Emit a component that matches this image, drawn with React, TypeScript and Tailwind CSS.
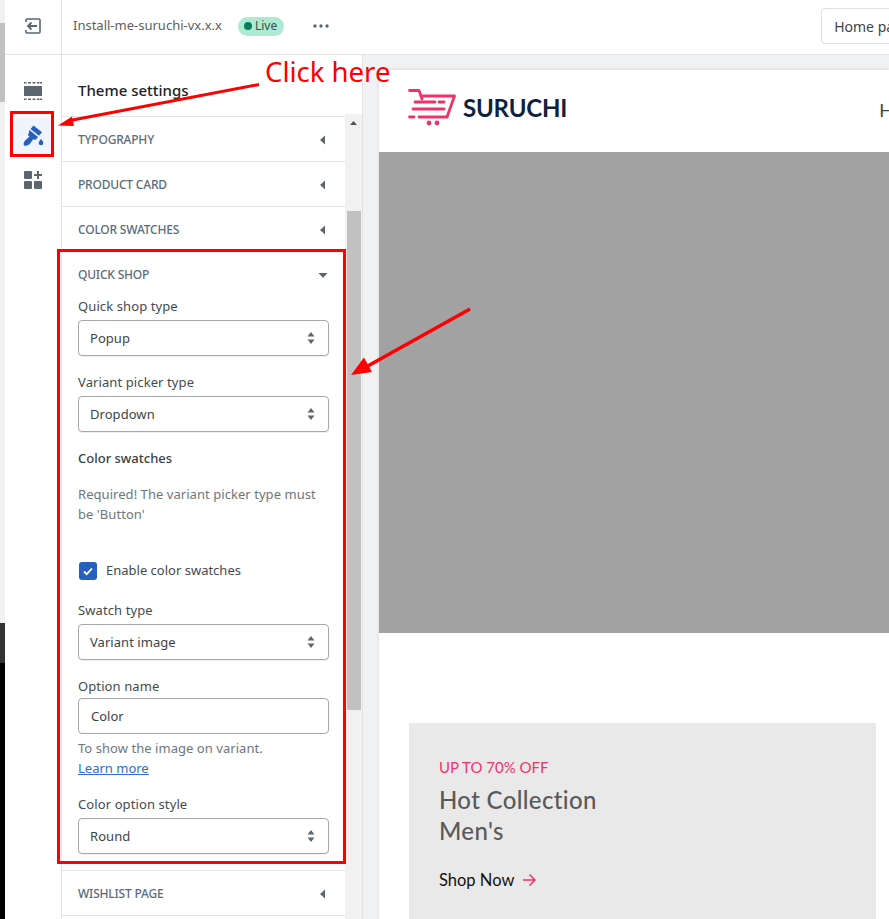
const uiFont = { fontFamily: '"Noto Sans", sans-serif' }

function Caret({ open }: { open?: boolean }) {
  return (
    <svg width="10" height="10" viewBox="0 0 10 10" className="shrink-0">
      {open ? <path d="M.5 3h9L5 8z" fill="#5c6670" /> : <path d="M8 .5v9L3 5z" fill="#5c6670" />}
    </svg>
  )
}

function SectionRow({ title }: { title: string }) {
  return (
    <div className="flex h-[45px] items-center justify-between border-b border-[#e1e3e5] pl-4 pr-[18px] pt-[2px]">
      <span className="text-[12px] font-medium tracking-[-0.2px] text-[#5c6b7e]">{title}</span>
      <Caret />
    </div>
  )
}

function SelectBox({ value }: { value: string }) {
  return (
    <div className="flex h-9 w-[251px] items-center justify-between rounded-[4px] border border-[#a3a8b0] bg-white pl-[11px] pr-[13px] text-[13px] tracking-[0.05px] text-[#3f4349] shadow-[0_1px_0_rgba(0,0,0,0.06)]">
      <span className="pt-[1px]">{value}</span>
      <svg width="8" height="14" viewBox="0 0 8 14" className="shrink-0">
        <path d="M4 1l3.500 4.500h-7zM4 13L.5 8.500h7z" fill="#5c6670" />
      </svg>
    </div>
  )
}

function Label({ children }: { children: React.ReactNode }) {
  return <div className="text-[13px] leading-5 tracking-[0.1px] text-[#454a50]">{children}</div>
}

function Sidebar() {
  return (
    <aside className="flex h-full w-[57px] shrink-0 flex-col items-center border-r border-[#e1e3e5] bg-white">
      <div className="flex h-[55px] w-full items-center justify-center border-b border-[#e1e3e5] pb-[2px] pr-[1px]">
        <svg width="16" height="16" viewBox="0 0 16 16" fill="none" className="shrink-0">
          <path d="M1 4V2a1 1 0 0 1 1-1h12a1 1 0 0 1 1 1v12a1 1 0 0 1-1 1H2a1 1 0 0 1-1-1v-2" stroke="#5c6670" strokeWidth="1.600" />
          <path d="M12 8H3M6.500 4.500L3 8l3.500 3.500" stroke="#5c6670" strokeWidth="1.800" />
        </svg>
      </div>
      <div className="mt-[27px] flex h-[18px] items-center justify-center">
        <svg width="18" height="18" viewBox="0 0 18 18" fill="#5c6670" className="shrink-0">
          <rect x="0" y="4" width="18" height="10" />
          <path d="M0 0h2.500v1.500H0zM4 0h3v1.500H4zM8.500 0h3v1.500h-3zM13 0h2.500v1.500H13zM16 0h2v1.500h-2zM0 16.500h2.500V18H0zM4 16.500h3V18H4zM8.500 16.500h3V18h-3zM13 16.500h2.500V18H13zM16 16.500h2V18h-2z" />
        </svg>
      </div>
      <div className="mt-[18px] flex h-9 w-9 items-center justify-center rounded-[4px] bg-[#f0f4fc]">
        <svg width="22" height="22" viewBox="0 0 22 22" fill="#2560bd" className="shrink-0">
          <path d="M11.500 .5l8.500 6.800-3 3.500-8.500-6.900z" />
          <path d="M7.500 5l8.500 7-1.900 2.300c-.5.600-1.300.700-1.900.2l-.8-.6-3.100 4.300c-1.200 1.500-3.900 3.300-6 2.200-1.400-.8-.5-3.400.9-4.800l4.300-4-1-.9c-.5-.5-.5-1.200-.1-1.700z" />
          <path d="M19 14c1.100 1.600 2.300 2.700 2.300 4a2.300 2.300 0 0 1-4.600 0c0-1.300 1.200-2.400 2.300-4z" />
        </svg>
      </div>
      <div className="mt-[17px] flex h-[18px] items-center justify-center">
        <svg width="18" height="18" viewBox="0 0 18 18" fill="#5c6670" className="shrink-0">
          <rect x="0" y="0" width="8" height="8" rx="1" />
          <rect x="0" y="10" width="8" height="8" rx="1" />
          <rect x="10" y="10" width="8" height="8" rx="1" />
          <path d="M13 0h2v3h3v2h-3v3h-2V5h-3V3h3z" />
        </svg>
      </div>
    </aside>
  )
}

function SettingsPanel() {
  return (
    <section className="flex h-full w-[301px] shrink-0 flex-col overflow-hidden border-r border-[#e1e3e5] bg-white">
      <h2 className="flex h-[61px] shrink-0 items-end pb-[16px] pl-4 text-[15px] font-medium leading-5 text-[#202328]">Theme settings</h2>
      <div className="flex min-h-0 flex-1">
        <div className="w-[283px] shrink-0 border-t border-[#e1e3e5]">
          <SectionRow title="TYPOGRAPHY" />
          <SectionRow title="PRODUCT CARD" />
          <SectionRow title="COLOR SWATCHES" />
          <div className="border-b border-[#e1e3e5] pb-4 pl-4 pr-4">
            <div className="flex h-[44px] items-center justify-between pr-[1px] pt-[1px]">
              <span className="text-[12px] font-medium tracking-[-0.2px] text-[#5c6b7e]">QUICK SHOP</span>
              <Caret open />
            </div>
            <div className="flex flex-col">
              <Label>Quick shop type</Label>
              <div className="mt-1"><SelectBox value="Popup" /></div>
              <div className="mt-4"><Label>Variant picker type</Label></div>
              <div className="mt-1"><SelectBox value="Dropdown" /></div>
              <div className="mt-4 text-[13px] font-medium leading-5 text-[#3a3e44]">Color swatches</div>
              <p className="mt-4 w-[251px] text-[13px] leading-5 tracking-[0.05px] text-[#6d7680]">Required! The variant picker type must be 'Button'</p>
              <label className="mt-[37px] flex h-5 items-center gap-[9px] pl-[1px]">
                <span className="flex h-[18px] w-[18px] items-center justify-center rounded-[3px] bg-[#2560bd]">
                  <svg width="12" height="12" viewBox="0 0 12 12" fill="none" className="shrink-0">
                    <path d="M2 6.500l2.700 2.700L10 3.500" stroke="white" strokeWidth="1.800" />
                  </svg>
                </span>
                <span className="text-[13px] text-[#454a50]">Enable color swatches</span>
              </label>
              <div className="mt-[19px]"><Label>Swatch type</Label></div>
              <div className="mt-1"><SelectBox value="Variant image" /></div>
              <div className="mt-4"><Label>Option name</Label></div>
              <div className="mt-[2px] flex h-9 w-[251px] items-center rounded-[4px] border border-[#a3a8b0] pl-3 pt-[1px] text-[13px] text-[#3f4349]">Color</div>
              <p className="mt-1 text-[13px] leading-5 tracking-[0.05px] text-[#6d7680]">To show the image on variant.</p>
              <a className="text-[13px] leading-5 text-[#2c6ecb] underline">Learn more</a>
              <div className="mt-[16px]"><Label>Color option style</Label></div>
              <div className="mt-1"><SelectBox value="Round" /></div>
            </div>
          </div>
          <SectionRow title="WISHLIST PAGE" />
        </div>
        <div className="-mt-[2px] flex w-[17px] shrink-0 flex-col items-center bg-[#f1f1f1]">
          <svg width="9" height="6" viewBox="0 0 9 6" className="mt-[6px] shrink-0">
            <path d="M4.500 1L8 5H1z" fill="#505050" />
          </svg>
          <div className="mt-[85px] h-[499px] w-[14px] shrink-0 bg-[#c1c1c1]" />
        </div>
      </div>
    </section>
  )
}

function Storefront() {
  return (
    <main className="ml-4 mt-[15px] flex h-full flex-1 flex-col overflow-hidden bg-white shadow-[0_0_3px_rgba(0,0,0,0.12)]">
      <header className="flex h-[82px] shrink-0 items-center whitespace-nowrap pb-[6px] pl-[29px]">
        <svg width="48" height="38" viewBox="0 0 48 38" fill="none" stroke="#f0326b" strokeWidth="2.800" strokeLinecap="round" strokeLinejoin="round" className="shrink-0">
          <path d="M1.500 1.500H11L14 10" />
          <path d="M14 7H46.500L39 28" />
          <path d="M7 13H27M31 13H36M5 20H36M1.500 28H6M11 28H39" />
          <circle cx="21" cy="34" r="2.400" fill="#f0326b" stroke="none" />
          <circle cx="29" cy="34" r="2.400" fill="#f0326b" stroke="none" />
        </svg>
        <span className="ml-[7px] shrink-0 text-[24px] font-bold leading-none tracking-[-0.2px] text-[#0e2141]" style={{ fontFamily: '"Lato", sans-serif' }}>SURUCHI</span>
        <span className="ml-[312px] mt-[4px] text-[18px] text-[#444]" style={{ fontFamily: '"Lato", sans-serif' }}>Home</span>
      </header>
      <div className="h-[481px] shrink-0 bg-[#a2a2a2]" />
      <div className="flex-1 pl-[30px] pt-[90px]">
        <div className="flex h-[220px] w-[467px] flex-col bg-[#e9e9e9] pl-[30px] pt-[34px]" style={{ fontFamily: '"Lato", sans-serif' }}>
          <div className="text-[15px] leading-5 text-[#f0346a]">UP TO 70% OFF</div>
          <h3 className="mt-[7px] text-[24px] font-medium leading-[31px] tracking-[0.35px] text-[#5a5a5a]">Hot Collection<br />Men's</h3>
          <div className="mt-[22px] flex items-center gap-[8px] text-[16.500px] leading-6 text-[#111]">
            <span>Shop Now</span>
            <svg width="14" height="14" viewBox="0 0 14 14" fill="none" stroke="#f0326b" strokeWidth="1.500" className="shrink-0">
              <path d="M1 7h12M7.500 1.500L13 7l-5.500 5.500" />
            </svg>
          </div>
        </div>
      </div>
    </main>
  )
}

function Annotations() {
  return (
    <>
      <div className="absolute left-[10px] top-[111px] h-[46px] w-[44px] border-[3px] border-[#ff0000]" />
      <div className="absolute left-[57px] top-[249px] h-[615px] w-[289px] border-[3px] border-[#ff0000]" />
      <div className="absolute left-[265px] top-[53px] text-[27.500px] leading-[37px] text-[#ff0000]">Click here</div>
      <svg width="889" height="919" className="pointer-events-none absolute left-0 top-0">
        <path d="M259 84.500L70 120.500" stroke="#ff0000" strokeWidth="3" />
        <path d="M58 125.500L72 116.500 74 126z" fill="#ff0000" />
        <path d="M470 309L366 367" stroke="#ff0000" strokeWidth="3.500" />
        <path d="M351 375L364 357.500 372 372z" fill="#ff0000" />
      </svg>
    </>
  )
}

export default function App() {
  return (
    <div className="relative flex h-[919px] w-[889px] overflow-hidden bg-white" style={uiFont}>
      <div className="flex h-full w-[5px] shrink-0 flex-col bg-[#f1f1f1]">
        <div className="mt-[23px] h-[79px] bg-[#c1c1c1]" />
        <div className="mt-[521px] h-10 bg-[#333333]" />
        <div className="flex-1 bg-black" />
      </div>
      <Sidebar />
      <div className="flex h-full min-w-0 flex-1 flex-col">
        <div className="flex h-[55px] shrink-0 items-center overflow-hidden whitespace-nowrap border-b border-[#e1e3e5] bg-white pb-[2px] pl-[11px]">
          <span className="text-[13px] text-[#5c6066]">Install-me-suruchi-vx.x.x</span>
          <span className="ml-[16px] flex h-[19px] items-center gap-[3px] rounded-full bg-[#aee9d1] pl-[6px] pr-[7px] text-[12px] text-[#32524a]">
            <span className="h-2 w-2 rounded-full bg-[#007f5f]" />
            Live
          </span>
          <svg width="16" height="4" viewBox="0 0 16 4" fill="#5c6670" className="ml-[29px] shrink-0">
            <circle cx="2" cy="2" r="1.700" />
            <circle cx="8" cy="2" r="1.700" />
            <circle cx="14" cy="2" r="1.700" />
          </svg>
          <div className="ml-[492px] flex h-9 w-[120px] shrink-0 items-center rounded-[4px] border border-[#dcdfe3] pl-3 text-[14px] text-[#3f4349]">Home page</div>
        </div>
        <div className="flex min-h-0 flex-1">
          <SettingsPanel />
          <div className="min-w-0 flex-1 bg-[#f0f1f3]">
            <Storefront />
          </div>
        </div>
      </div>
      <Annotations />
    </div>
  )
}
